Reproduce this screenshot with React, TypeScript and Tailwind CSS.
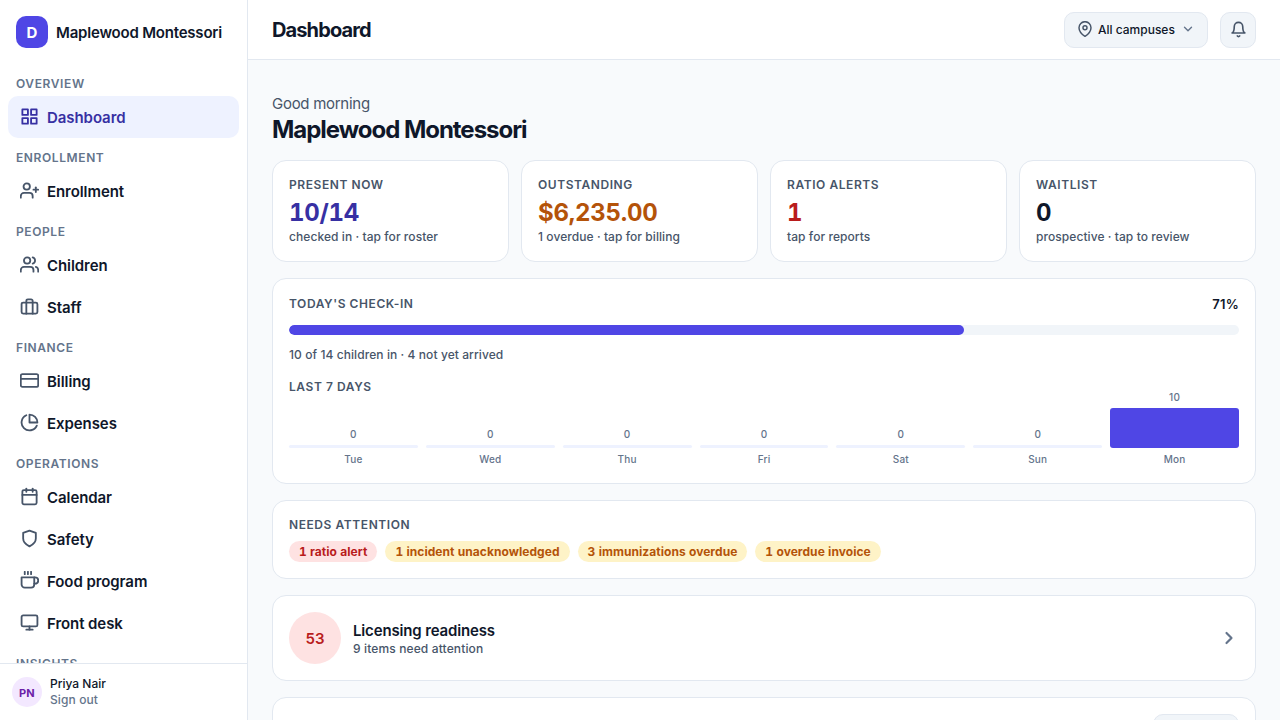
import type { IconType } from "react-icons";
import {
    FiBell,
    FiBriefcase,
    FiCalendar,
    FiChevronDown,
    FiChevronRight,
    FiCoffee,
    FiCreditCard,
    FiGrid,
    FiMapPin,
    FiMonitor,
    FiPieChart,
    FiShield,
    FiUserPlus,
    FiUsers,
} from "react-icons/fi";

type NavItem = { label: string; icon: IconType; active?: boolean };

const navGroups: { title: string; items: NavItem[] }[] = [
    { title: "Overview", items: [{ label: "Dashboard", icon: FiGrid, active: true }] },
    { title: "Enrollment", items: [{ label: "Enrollment", icon: FiUserPlus }] },
    {
        title: "People",
        items: [
            { label: "Children", icon: FiUsers },
            { label: "Staff", icon: FiBriefcase },
        ],
    },
    {
        title: "Finance",
        items: [
            { label: "Billing", icon: FiCreditCard },
            { label: "Expenses", icon: FiPieChart },
        ],
    },
    {
        title: "Operations",
        items: [
            { label: "Calendar", icon: FiCalendar },
            { label: "Safety", icon: FiShield },
            { label: "Food program", icon: FiCoffee },
            { label: "Front desk", icon: FiMonitor },
        ],
    },
    { title: "Insights", items: [] },
];

const stats = [
    { label: "Present now", value: "10/14", hint: "checked in · tap for roster", color: "text-[#3730a3]" },
    { label: "Outstanding", value: "$6,235.00", hint: "1 overdue · tap for billing", color: "text-[#b45309]" },
    { label: "Ratio alerts", value: "1", hint: "tap for reports", color: "text-[#b91c1c]" },
    { label: "Waitlist", value: "0", hint: "prospective · tap to review", color: "text-[#0f172a]" },
];

const week = [
    { day: "Tue", count: 0 },
    { day: "Wed", count: 0 },
    { day: "Thu", count: 0 },
    { day: "Fri", count: 0 },
    { day: "Sat", count: 0 },
    { day: "Sun", count: 0 },
    { day: "Mon", count: 10 },
];

const alerts = [
    { text: "1 ratio alert", tone: "bg-[#fee2e2] text-[#b91c1c]" },
    { text: "1 incident unacknowledged", tone: "bg-[#fef3c7] text-[#b45309]" },
    { text: "3 immunizations overdue", tone: "bg-[#fef3c7] text-[#b45309]" },
    { text: "1 overdue invoice", tone: "bg-[#fef3c7] text-[#b45309]" },
];

function Sidebar() {
    return (
        <aside className="flex w-[248px] shrink-0 flex-col border-r border-[#e2e8f0] bg-white">
            <div className="flex h-16 shrink-0 items-center gap-2 px-4">
                <div className="flex size-8 items-center justify-center rounded-[10px] bg-[#4f46e5] pt-0.5 text-[15px] font-bold text-white">
                    D
                </div>
                <span className="pt-0.5 text-[15px] font-semibold tracking-[-0.2px]">Maplewood Montessori</span>
            </div>
            <nav className="min-h-0 flex-1 overflow-hidden px-2">
                {navGroups.map((group) => (
                    <div key={group.title}>
                        <div className="h-8 px-2 pt-3 text-xs leading-4 font-semibold tracking-[0.6px] text-[#64748b] uppercase">
                            {group.title}
                        </div>
                        {group.items.map(({ label, icon: Icon, active }) => (
                            <a
                                key={label}
                                className={
                                    active
                                        ? "flex h-[42px] items-center gap-2 rounded-[10px] bg-[#eef2ff] px-3 text-[15px] font-semibold text-[#3730a3]"
                                        : "flex h-[42px] items-center gap-2 rounded-[10px] px-3 text-[15px] font-semibold"
                                }
                            >
                                <Icon
                                    size={19}
                                    strokeWidth={2.3}
                                    className={active ? "mb-px text-[#3730a3]" : "mb-px text-[#475569]"}
                                />
                                <span className="pt-0.5 tracking-[-0.07px]">{label}</span>
                            </a>
                        ))}
                    </div>
                ))}
            </nav>
            <div className="flex h-[57px] shrink-0 items-center gap-2 border-t border-[#e2e8f0] px-3">
                <div className="flex size-[30px] items-center justify-center rounded-full bg-[#f3e8ff] pt-0.5 text-[11px] font-bold tracking-[0.3px] text-[#6b21a8]">
                    PN
                </div>
                <div className="text-xs leading-4 font-medium">
                    <div>Priya Nair</div>
                    <div className="tracking-[0.1px] text-[#64748b]">Sign out</div>
                </div>
            </div>
        </aside>
    );
}

function Header() {
    return (
        <header className="flex h-[60px] shrink-0 items-center justify-between border-b border-[#e2e8f0] bg-white px-6">
            <h1 className="text-xl font-bold tracking-[-0.88px]">Dashboard</h1>
            <div className="flex items-center gap-3">
                <button className="flex h-9 w-36 items-center rounded-[10px] border border-[#e2e8f0] bg-[#f1f5f9] pl-3 text-xs font-medium">
                    <FiMapPin size={16} strokeWidth={2.2} className="mr-[5px] mb-px text-[#475569]" />
                    All campuses
                    <FiChevronDown size={14} strokeWidth={2.4} className="ml-1.5 mb-0.5 text-[#64748b]" />
                </button>
                <button className="flex size-9 items-center justify-center rounded-[10px] border border-[#e2e8f0] bg-[#f1f5f9] text-[#475569]">
                    <FiBell size={17} strokeWidth={2.3} className="mb-px" />
                </button>
            </div>
        </header>
    );
}

function Overline({ children }: { children: string }) {
    return (
        <div className="text-xs leading-4 font-semibold tracking-[0.57px] text-[#475569] uppercase">{children}</div>
    );
}

function CheckInCard() {
    return (
        <section className="h-[206px] shrink-0 rounded-[14px] border border-[#e2e8f0] bg-white p-4">
            <div className="flex h-[18px] items-center justify-between">
                <Overline>Today's check-in</Overline>
                <span className="pt-px text-[13px] font-semibold tracking-[0.2px]">71%</span>
            </div>
            <div className="mt-3 h-2.5 overflow-hidden rounded-full bg-[#f1f5f9]">
                <div className="h-full rounded-full bg-[#4f46e5]" style={{ width: "71%" }} />
            </div>
            <p className="mt-3 text-xs leading-4 font-medium tracking-[0.08px] text-[#475569]">
                10 of 14 children in · 4 not yet arrived
            </p>
            <div className="mt-4">
                <Overline>Last 7 days</Overline>
            </div>
            <div className="-mt-1 flex items-end gap-2">
                {week.map(({ day, count }) => (
                    <div key={day} className="flex flex-1 flex-col items-center text-[10px] leading-[13px] font-medium text-[#64748b]">
                        <span className="tracking-[0.02em]">{count}</span>
                        <div
                            className={
                                count > 0
                                    ? "mt-1 w-full rounded-[3px] bg-[#4f46e5]"
                                    : "mt-1 w-full rounded-[3px] bg-[#eef2ff]"
                            }
                            style={{ height: Math.max(3, count * 4) }}
                        />
                        <span className="mt-[5px] tracking-[0.02em]">{day}</span>
                    </div>
                ))}
            </div>
        </section>
    );
}

export default function App() {
    return (
        <div className="flex h-screen overflow-hidden bg-[#f8fafc] font-['Inter',sans-serif] text-[#0f172a]">
            <Sidebar />
            <div className="flex min-w-0 flex-1 flex-col">
                <Header />
                <main className="flex min-h-0 flex-1 flex-col gap-4 overflow-hidden px-6 pt-8">
                    <div className="h-[52px] shrink-0">
                        <p className="text-[15px] leading-6 tracking-[-0.28px] text-[#475569]">Good morning</p>
                        <h2 className="text-2xl leading-7 font-bold tracking-[-1.03px]">Maplewood Montessori</h2>
                    </div>

                    <div className="grid shrink-0 grid-cols-4 gap-3">
                        {stats.map((stat) => (
                            <div key={stat.label} className="h-[102px] rounded-[14px] border border-[#e2e8f0] bg-white p-4">
                                <Overline>{stat.label}</Overline>
                                <div className={`mt-1.5 text-2xl leading-7 font-bold tracking-[-0.25px] tabular-nums ${stat.color}`}>
                                    {stat.value}
                                </div>
                                <div className="mt-0.5 text-xs leading-4 font-medium tracking-[0.07px] text-[#475569]">{stat.hint}</div>
                            </div>
                        ))}
                    </div>

                    <CheckInCard />

                    <section className="h-[79px] shrink-0 rounded-[14px] border border-[#e2e8f0] bg-white p-4">
                        <Overline>Needs attention</Overline>
                        <div className="mt-2 flex gap-2">
                            {alerts.map((alert) => (
                                <span
                                    key={alert.text}
                                    className={`flex h-[21px] items-center rounded-full px-2.5 text-xs font-bold tracking-[0.05px] tabular-nums ${alert.tone}`}
                                >
                                    {alert.text}
                                </span>
                            ))}
                        </div>
                    </section>

                    <section className="flex h-[86px] shrink-0 items-center gap-3 rounded-[14px] border border-[#e2e8f0] bg-white p-4">
                        <div className="flex size-[52px] items-center justify-center rounded-full bg-[#fee2e2] pt-0.5 text-[15px] font-semibold text-[#b91c1c]">
                            53
                        </div>
                        <div className="flex-1 pt-0.5">
                            <div className="text-[15px] leading-5 font-semibold tracking-[-0.15px]">Licensing readiness</div>
                            <div className="text-xs leading-4 font-medium tracking-[0.13px] text-[#475569]">9 items need attention</div>
                        </div>
                        <FiChevronRight size={20} strokeWidth={2.6} className="text-[#64748b]" />
                    </section>

                    {/* next card runs past the fold */}
                    <section className="flex h-[120px] shrink-0 justify-end rounded-[14px] border border-[#e2e8f0] bg-white p-4">
                        <button className="h-9 w-[86px] rounded-[10px] border border-[#e2e8f0] bg-[#f1f5f9]" />
                    </section>
                </main>
            </div>
        </div>
    );
}
